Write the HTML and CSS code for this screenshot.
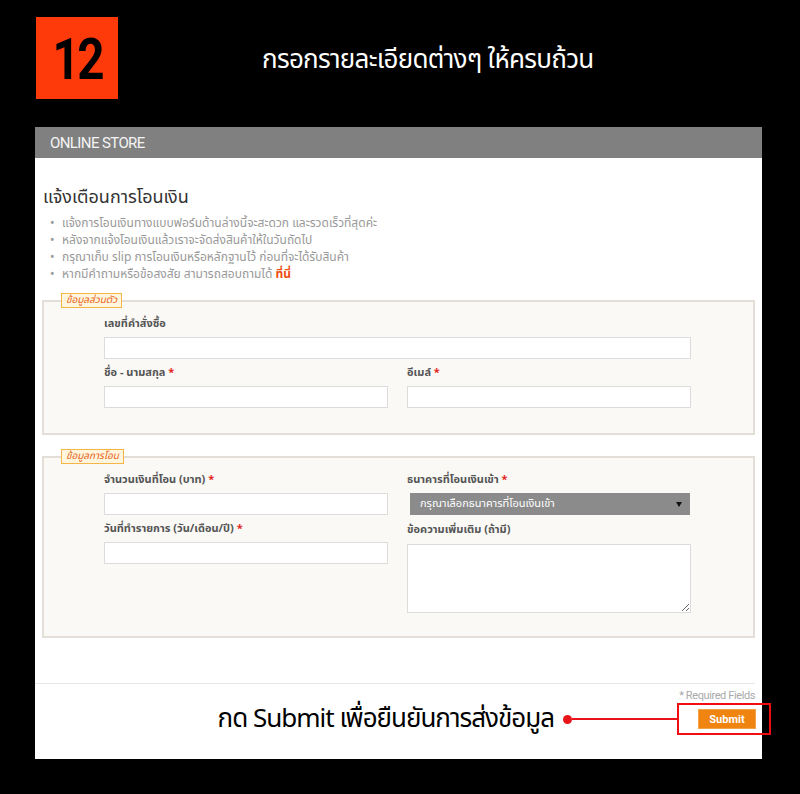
FILE: index.html
```html
<!DOCTYPE html>
<html lang="th">

<head>
    <meta charset="UTF-8">
    <meta name="viewport" content="width=device-width, initial-scale=1.0">
    <title>แจ้งเตือนการโอนเงิน</title>
    <link rel="stylesheet" href="styles.css">
</head>

<body>
    <div class="top">
        <div class="step"><span>12</span></div>
        <h1 class="top-title">กรอกรายละเอียดต่างๆ ให้ครบถ้วน</h1>
    </div>

    <div class="panel">
        <div class="panel-head">ONLINE STORE</div>
        <div class="panel-body">
            <h2 class="page-title">แจ้งเตือนการโอนเงิน</h2>
            <ul class="notes">
                <li>แจ้งการโอนเงินทางแบบฟอร์มด้านล่างนี้จะสะดวก และรวดเร็วที่สุดค่ะ</li>
                <li>หลังจากแจ้งโอนเงินแล้วเราจะจัดส่งสินค้าให้ในวันถัดไป</li>
                <li>กรุณาเก็บ slip การโอนเงินหรือหลักฐานไว้ ก่อนที่จะได้รับสินค้า</li>
                <li>หากมีคำถามหรือข้อสงสัย สามารถสอบถามได้ <a href="">ที่นี่</a></li>
            </ul>

            <fieldset class="group">
                <legend>ข้อมูลส่วนตัว</legend>
                <div class="grid">
                    <div class="field wide">
                        <label>เลขที่คำสั่งซื้อ</label>
                        <input type="text">
                    </div>
                    <div class="field">
                        <label>ชื่อ - นามสกุล <span class="req">*</span></label>
                        <input type="text">
                    </div>
                    <div class="field">
                        <label>อีเมล์ <span class="req">*</span></label>
                        <input type="text">
                    </div>
                </div>
            </fieldset>

            <fieldset class="group">
                <legend>ข้อมูลการโอน</legend>
                <div class="grid">
                    <div class="col">
                        <div class="field">
                            <label>จำนวนเงินที่โอน (บาท) <span class="req">*</span></label>
                            <input type="text">
                        </div>
                        <div class="field">
                            <label>วันที่ทำรายการ (วัน/เดือน/ปี) <span class="req">*</span></label>
                            <input type="text">
                        </div>
                    </div>
                    <div class="col">
                        <div class="field">
                            <label>ธนาคารที่โอนเงินเข้า <span class="req">*</span></label>
                            <div class="select">กรุณาเลือกธนาคารที่โอนเงินเข้า<span class="arrow"></span></div>
                        </div>
                        <div class="field note">
                            <label>ข้อความเพิ่มเติม (ถ้ามี)</label>
                            <textarea></textarea>
                        </div>
                    </div>
                </div>
            </fieldset>

            <div class="foot">
                <p class="required">* Required Fields</p>
                <div class="submit-row">
                    <span class="hint">กด Submit เพื่อยืนยันการส่งข้อมูล</span>
                    <span class="dot"></span>
                    <span class="line"></span>
                    <div class="mark">
                        <button type="button" class="btn">Submit</button>
                    </div>
                </div>
            </div>
        </div>
    </div>
</body>

</html>
```

FILE: styles.css
```css
body,
h1,
h2,
ul,
li,
p {
    margin: 0;
    padding: 0;
    font-weight: normal;
    list-style: none;
}

body {
    background: #000;
    font-family: Tahoma, "Noto Sans Thai", "Noto Sans", "DejaVu Sans", sans-serif;
}

a {
    text-decoration: none;
}

/* หัวข้อขั้นตอน */
.top {
    display: flex;
    align-items: center;
    padding: 17px 0 0 36px;
    height: 82px;
}

.step {
    width: 82px;
    height: 82px;
    background: #ff3a0a;
    color: #000;
    font-family: Roboto, "Liberation Sans", sans-serif;
    font-weight: bold;
    font-size: 58px;
    letter-spacing: -3px;
    line-height: 84px;
    text-align: center;
}

.step span {
    display: inline-block;
    transform: scaleX(0.82);
}

.top-title {
    margin-left: 144px;
    color: #fff;
    font-size: 26px;
    letter-spacing: -0.7px;
    line-height: 32px;
    padding-top: 4px;
}

/* กล่องฟอร์ม */
.panel {
    width: 727px;
    margin: 28px 0 0 35px;
    background: #fff;
}

.panel-head {
    height: 31px;
    padding-left: 15px;
    background: #808080;
    color: #f4f4f4;
    font-family: Roboto, "Liberation Sans", sans-serif;
    font-size: 15px;
    letter-spacing: -0.6px;
    line-height: 32px;
}

.panel-body {
    padding: 29px 7px 24px;
}

.page-title {
    margin-left: 1px;
    color: #333;
    font-size: 18px;
    line-height: 22px;
}

.notes {
    margin: 6px 0 10px;
    padding-left: 20px;
}

.notes li {
    position: relative;
    color: #999;
    font-size: 12px;
    line-height: 17px;
}

.notes li:before {
    content: "•";
    position: absolute;
    left: -12px;
    color: #999;
}

.notes a {
    color: #ee4d12;
    font-weight: bold;
}

/* กลุ่มข้อมูล */
.group {
    margin: 0 0 14px;
    padding: 0;
    border: 2px solid #e3dfd8;
    background: #faf9f5;
}

.group legend {
    margin-left: 17px;
    padding: 0 4px;
    border: 1px solid #f6b548;
    background: #fff6dd;
    color: #e9621a;
    font-size: 10px;
    font-style: italic;
    line-height: 13px;
}

.grid {
    display: grid;
    grid-template-columns: 284px 284px;
    column-gap: 19px;
    row-gap: 6px;
    padding: 8px 0 25px 60px;
}

.group + .group .grid {
    padding-bottom: 23px;
}

.col {
    display: flex;
    flex-direction: column;
    gap: 6px;
}

.wide {
    grid-column: 1 / 3;
}

.field label {
    display: block;
    height: 16px;
    margin-bottom: 5px;
    color: #555;
    font-size: 11px;
    font-weight: bold;
    line-height: 16px;
}

.req {
    color: #e3261b;
}

.field input,
.field textarea {
    display: block;
    box-sizing: border-box;
    width: 284px;
    height: 22px;
    margin: 0;
    border: 1px solid #dcdcdc;
    background: #fff;
}

.field.wide input {
    width: 587px;
}

.note label {
    margin-top: 1px;
    margin-bottom: 6px;
}

.field textarea {
    height: 69px;
    resize: vertical;
}

.select {
    position: relative;
    box-sizing: border-box;
    width: 280px;
    height: 22px;
    margin-left: 3px;
    padding-left: 10px;
    background: #8b8b8b;
    color: #fff;
    font-size: 11px;
    line-height: 22px;
}

.arrow {
    position: absolute;
    right: 8px;
    top: 9px;
    border-left: 3px solid transparent;
    border-right: 3px solid transparent;
    border-top: 5px solid #111;
}

/* ปุ่มส่ง */
.foot {
    margin: 0 -7px;
    padding-top: 31px;
}

.foot:before {
    content: "";
    display: block;
    height: 1px;
    margin-right: 7px;
    background: #e6e6e6;
}

.required {
    padding: 5px 7px 0 0;
    color: #aaa;
    font-family: Roboto, "Liberation Sans", sans-serif;
    font-size: 11px;
    letter-spacing: -0.4px;
    line-height: 14px;
    text-align: right;
}

.submit-row {
    display: flex;
    align-items: center;
    justify-content: flex-end;
    margin-right: -9px;
}

.hint {
    color: #000;
    font-size: 26px;
    letter-spacing: -1px;
    line-height: 32px;
}

.dot {
    width: 9px;
    height: 9px;
    margin-left: 9px;
    border-radius: 50%;
    background: #e8141a;
}

.line {
    width: 105px;
    height: 2px;
    background: #e8141a;
}

.mark {
    display: flex;
    align-items: center;
    box-sizing: border-box;
    width: 94px;
    height: 32px;
    padding-left: 19px;
    border: 2px solid #f20d12;
}

.btn {
    width: 58px;
    height: 20px;
    padding: 0;
    border: 1px solid #f3a24a;
    background: #ef8410;
    color: #fff;
    font-family: Roboto, "Liberation Sans", sans-serif;
    font-size: 11px;
    font-weight: bold;
}
```
